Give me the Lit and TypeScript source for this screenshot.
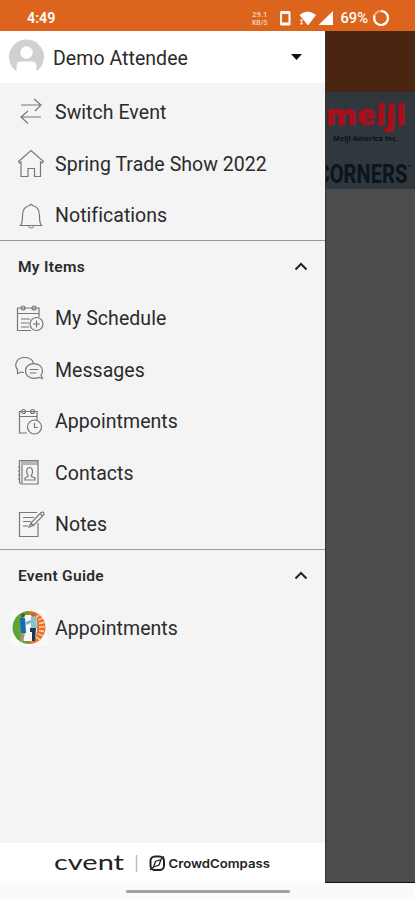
import { LitElement, html, css, svg } from "lit";
import { customElement } from "lit/decorators.js";

const icons: Record<string, unknown> = {
  switch: svg`<path d="M7 9H27M20 3l7 6L21 15M27 21H8M14 15l-7 6l7 6.500"/>`,
  home: svg`<path d="M4.500 14.500L17 3.500L29.500 14.500L28 16L26.500 15V29.500H20.500V21.500H14V29.500H7V15L5.500 16Z"/>`,
  bell: svg`<path d="M6.500 26.500C8.500 24.500 8.500 22 8.500 17C8.500 10 11 8 15.500 6.500C16 5 18 5 18.500 6.500C23 8 25.500 10 25.500 17C25.500 22 25.500 24.500 27.500 26.500Z M14.500 27.500C15.500 29.500 18.500 29.500 19.500 27.500"/>`,
  schedule: svg`<path d="M17 28.500H3.500V6H25V15M3.500 11.500H25M7 17h9M7 21h8M7 25h8"/><circle cx="9" cy="6" r="2"/><circle cx="20" cy="6" r="2"/><circle cx="22.500" cy="22" r="6.500"/><path d="M22.500 18.500v7M19 22h7"/>`,
  messages: svg`<path d="M10 19.500L7 19L3.500 20.500L3.500 16.500C-.5 12 3 4.500 10 4.500C14.500 4.500 18.500 6.500 19.500 10M28.500 25.500L24.500 24.500C18 27 11.500 23.500 11.500 18C11.500 8.500 27.500 8 28.500 17.500C28.500 19 28 21 27 22.500ZM15.500 16.500h9M15.500 20h7"/>`,
  appointments: svg`<path d="M13 28H5.500V6.500H23V15M5.500 11.500H23"/><circle cx="9.500" cy="6.500" r="2"/><circle cx="18.500" cy="6.500" r="2"/><circle cx="20.500" cy="22" r="7"/><path d="M20.500 18V22.500H24"/>`,
  contacts: svg`<path d="M5.500 4.500H24V28H7L5.500 26.500ZM7 6h17M7 8h17M8 9V27"/><path stroke-dasharray="2 2" d="M5 10V26"/><path d="M11 24V22L14 20.500V19C11.500 16 12.500 11.500 15.500 11.500S19.500 16 17.500 19V20.500L21 22V24Z"/>`,
  notes: svg`<path d="M23 4.500H5.500V28.500H24V15M9 9.500h11M9 13.500h8M9 18h5M15 19L17 15L27 4.500Q30 3 30 6.500L19.500 17.500ZM17 15l2.500 2.500M26 5.500l2.500 2.500"/>`,
};

@customElement("app-root")
class AppRoot extends LitElement {
  static styles = css`
    :host { display: flex; flex-direction: column; width: 415px; height: 900px; overflow: hidden; background: #fafafa; font-family: Roboto, "Liberation Sans", sans-serif; color: #2b2b2b; }
    .status { height: 31px; background: #dc641d; flex: none; }
    svg { display: block; }
    .body { display: flex; height: 852px; flex: none; }
    .drawer { width: 325px; display: flex; flex-direction: column; background: #f4f4f4; flex: none; }
    .profile { height: 52px; background: #fff; display: flex; align-items: center; flex: none; }
    .profile .name { flex: 1; margin-left: 8px; padding-top: 2px; font-size: 19.500px; letter-spacing: .05px; }
    .avatar { margin-left: 9px; }
    .caret { margin-right: 23px; }
    .row { height: 51.600px; display: flex; align-items: center; flex: none; }
    .row .icon { width: 34px; margin-left: 14px; flex: none; }
    .row .label { margin-left: 7px; font-size: 19.500px; letter-spacing: .05px; white-space: nowrap; }
    .icon svg { fill: none; stroke: #777; stroke-width: 1.200; }
    .icon .badge { stroke: none; margin-left: -3px; }
    .group { flex: none; }
    .group.first { padding-top: 4px; margin-bottom: -2px; }
    .group + .group { border-top: 1px solid #999; }
    .rows { padding-top: .4px; }
    .group.last { margin-top: -1.400px; }
    .title { height: 51.600px; display: flex; align-items: center; justify-content: space-between; padding: 0 17px 0 18px; font-size: 15.500px; font-weight: 600; letter-spacing: .3px; }
    .foot { margin-top: auto; height: 40px; background: #fff; }
    .page { width: 89px; height: 851px; border-left: 1px solid #333; border-bottom: 1px solid #111; background: #4c4c4c; box-sizing: content-box; }
    .banner { height: 61px; background: #4a2511; }
    .sponsors { background: #30383d; height: 97px; }
    .nav { flex: 1; display: flex; justify-content: center; padding-top: 7px; }
    .pill { width: 164px; height: 3px; border-radius: 2px; background: #a1a1a1; }
  `;

  row(icon: string, label: string) {
    return html`<div class="row"><div class="icon"><svg width="34" height="34" viewBox="0 0 34 34">${icons[icon]}</svg></div><span class="label">${label}</span></div>`;
  }

  heading(label: string) {
    return html`<div class="title"><span>${label}</span><svg width="14" height="10" viewBox="0 0 14 10"><path d="M1.500 7.500L7 2l5.500 5.500" fill="none" stroke="#222" stroke-width="2"/></svg></div>`;
  }

  render() {
    return html`
      <div class="status">
        <svg width="415" height="31" font-family="Roboto" fill="#fff">
          <text x="27" y="23" font-size="14" font-weight="600" textLength="28.500" lengthAdjust="spacingAndGlyphs">4:49</text>
          <g fill="#f8d4bc" font-weight="500"><text x="252" y="17" font-size="8" textLength="15.500" lengthAdjust="spacingAndGlyphs">29.1</text>
          <text x="252" y="25" font-size="7" textLength="15.500" lengthAdjust="spacingAndGlyphs">KB/S</text></g>
          <path fill-rule="evenodd" d="M281.500 11h7.500q1.500 0 1.500 1.500v11.500q0 1.500-1.500 1.500h-7.500q-1.500 0-1.500-1.500v-11.500q0-1.500 1.500-1.500ZM282 14v8.500h6.500V14Z"/>
          <path d="M299.500 15Q307.500 8 316 15L308 25.500Z" />
          <path d="M300.500 19.500h2v2h-2z M300.500 22.500h2v2h-2z M318.500 25L333 11V25Z"/>
          <text x="340.500" y="23" font-size="14" font-weight="500" textLength="27.500" lengthAdjust="spacingAndGlyphs">69%</text>
          <circle cx="381" cy="18" r="7" fill="none" stroke="#f3aa80" stroke-width="2.200"/>
          <path d="M381 11A7 7 0 1 1 374.500 15.500" fill="none" stroke="#fff" stroke-width="2.200"/>
        </svg>
      </div>
      <div class="body">
        <div class="drawer">
          <div class="profile">
            <svg class="avatar" width="36" height="36" viewBox="0 0 36 36">
              <circle cx="17.500" cy="18" r="17.500" fill="#d0d0d0"/>
              <circle cx="17.500" cy="13.500" r="6.200" fill="#fff"/>
              <path d="M7.500 36V27Q7.500 22.500 12 22.500H23Q27.500 22.500 27.500 27V36Z" fill="#fff"/>
              <path d="M0 32H36V36H0Z" fill="#fff"/>
            </svg>
            <span class="name">Demo Attendee</span>
            <svg class="caret" width="11" height="6" viewBox="0 0 11 6"><path d="M0 0H11L5.500 6Z" fill="#111"/></svg>
          </div>
          <div class="group first">
            ${this.row("switch", "Switch Event")}
            ${this.row("home", "Spring Trade Show 2022")}
            ${this.row("bell", "Notifications")}
          </div>
          <div class="group">
            ${this.heading("My Items")}
            <div class="rows">
              ${this.row("schedule", "My Schedule")}
              ${this.row("messages", "Messages")}
              ${this.row("appointments", "Appointments")}
              ${this.row("contacts", "Contacts")}
              ${this.row("notes", "Notes")}
            </div>
          </div>
          <div class="group last">
            ${this.heading("Event Guide")}
            <div class="row rows">
              <div class="icon">
                <svg class="badge" width="36" height="36" viewBox="0 0 36 36">
                  <path d="M0 0H36V36H0Z" fill="#f9f9f7"/>
                  <path d="M18 1A16.500 16.500 0 0 0 18 34Z" fill="#5da53a"/>
                  <path d="M18 1A16.500 16.500 0 0 1 18 34Z" fill="#e8712e"/>
                  <path d="M13 5H23Q27 10 26 18Q26 27 22 31H13Q9 25 10 17Z" fill="#f6f8f6"/>
                  <path d="M27 10l5-2M28 13.500l5-1M28 17l6-.2M28 20.500l5 1M27 24l5 2M25 27l4 3M25 8l3-3" stroke="#fbdcc4" stroke-width="1.300"/>
                  <circle cx="12" cy="5.500" r="2" fill="#684b35"/>
                  <path d="M9 8H14L15 23H10Z" fill="#176cae"/>
                  <path d="M10 23H14L12 32H9Z" fill="#a59770"/>
                  <circle cx="22" cy="5" r="2" fill="#a86d4e"/>
                  <path d="M20 7H25L26 18H20Z" fill="#86c6cb"/>
                  <path d="M14 12L20 10V13L15 15Z" fill="#77b5d1"/>
                  <path d="M19 18H25L24 31H21V22H19Z" fill="#173a55"/>
                </svg>
              </div>
              <span class="label">Appointments</span>
            </div>
          </div>
          <div class="foot">
            <svg width="325" height="40" fill="#222">
              <text x="54" y="27" font-family="Lato" font-size="21.500" textLength="70" lengthAdjust="spacingAndGlyphs">cvent</text>
              <path d="M136.500 12V29" stroke="#bbb" stroke-width="1.500"/>
              <rect x="150.500" y="13.500" width="13.500" height="13.500" rx="4.500" fill="none" stroke="#222" stroke-width="2"/>
              <path d="M153.500 24L155.500 18.500L161 16.500L159 22ZM150 27L154 23.500M160.500 17L164 13.500" fill="none" stroke="#222" stroke-width="1.300"/>
              <text x="168.500" y="24.500" font-family="Inter" font-size="12" font-weight="600" textLength="101.500" lengthAdjust="spacingAndGlyphs">CrowdCompass</text>
            </svg>
          </div>
        </div>
        <div class="page">
          <div class="banner"></div>
          <div class="sponsors">
            <svg width="89" height="97">
              <text x="0" y="33" font-family="Open Sans" font-size="29" font-weight="800" fill="#a90f1b" stroke="#a90f1b" stroke-width=".4" textLength="80" lengthAdjust="spacingAndGlyphs">meiji</text>
              <circle cx="83.500" cy="12" r="1" fill="#80202a"/>
              <text x="7" y="49" font-family="Open Sans" font-size="7" font-weight="700" fill="#0c1014" textLength="65" lengthAdjust="spacingAndGlyphs">Meiji America Inc.</text>
              <text x="-9.500" y="91" font-family="Roboto" font-size="25" font-weight="800" fill="#0d151c" textLength="91" lengthAdjust="spacingAndGlyphs">CORNERS</text>
              <circle cx="83.500" cy="74" r="1" fill="#0d151c"/>
            </svg>
          </div>
        </div>
      </div>
      <div class="nav"><div class="pill"></div></div>
    `;
  }
}
